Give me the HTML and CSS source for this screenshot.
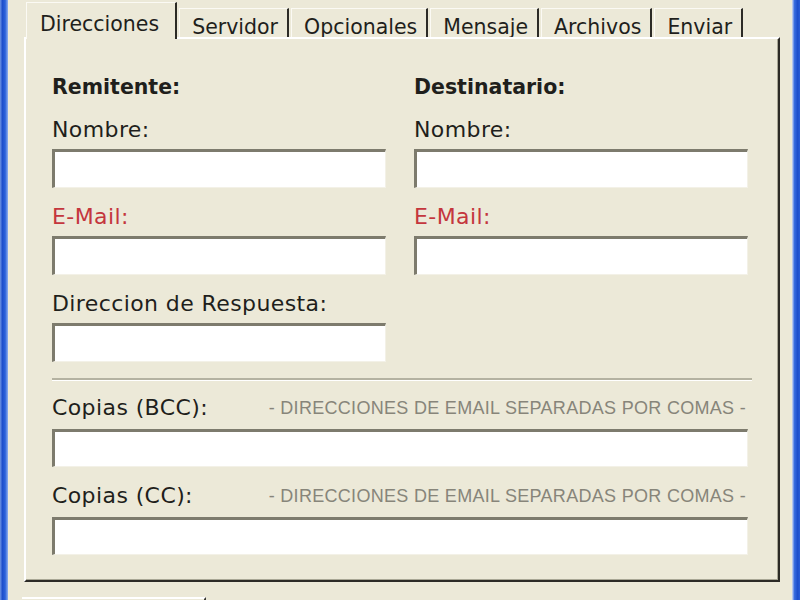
FILE: index.html
```html
<!DOCTYPE html>
<html lang="es">
<head>
  <meta charset="UTF-8">
  <title>Enviar correo</title>
  <link rel="stylesheet" href="styles.css">
</head>
<body>
  <div class="frame">
    <div class="edge edge-left"></div>

    <div class="window">
      <div class="tabs">
        <div class="tab active">Direcciones</div>
        <div class="tab">Servidor</div>
        <div class="tab">Opcionales</div>
        <div class="tab">Mensaje</div>
        <div class="tab">Archivos</div>
        <div class="tab">Enviar</div>
      </div>

      <div class="panel">
        <div class="cols">
          <div class="col">
            <div class="heading">Remitente:</div>
            <label class="field-label" for="fromName">Nombre:</label>
            <input class="field" type="text" id="fromName">
            <label class="field-label required" for="fromMail">E-Mail:</label>
            <input class="field" type="text" id="fromMail">
            <label class="field-label" for="replyTo">Direccion de Respuesta:</label>
            <input class="field" type="text" id="replyTo">
          </div>
          <div class="col">
            <div class="heading">Destinatario:</div>
            <label class="field-label" for="toName">Nombre:</label>
            <input class="field" type="text" id="toName">
            <label class="field-label required" for="toMail">E-Mail:</label>
            <input class="field" type="text" id="toMail">
          </div>
        </div>

        <div class="separator"></div>

        <div class="label-row">
          <label class="field-label" for="bcc">Copias (BCC):</label>
          <span class="hint">- DIRECCIONES DE EMAIL SEPARADAS POR COMAS -</span>
        </div>
        <input class="field wide" type="text" id="bcc">

        <div class="label-row">
          <label class="field-label" for="cc">Copias (CC):</label>
          <span class="hint">- DIRECCIONES DE EMAIL SEPARADAS POR COMAS -</span>
        </div>
        <input class="field wide" type="text" id="cc">
      </div>

      <div class="buttons">
        <button class="btn" type="button"></button>
      </div>
    </div>

    <div class="edge edge-right"></div>
  </div>
</body>
</html>
```

FILE: styles.css
```css
* { box-sizing: border-box; }
body { margin: 0; background: #ece9d8; font-family: "DejaVu Sans", Verdana, sans-serif; color: #1f1f1c; overflow: hidden; }

.frame { display: flex; width: 800px; height: 600px; }
.edge { width: 8px; flex: none; }
.edge-left { background: linear-gradient(90deg, #6f95e4 0, #1d4ecb 30%, #2c62da 65%, #8fb0ee 100%); }
.edge-right { background: linear-gradient(90deg, #d6def2 0, #3a6ee0 30%, #1d4ecb 70%, #2a5dd6 100%); }
.window { flex: 1; display: flex; flex-direction: column; background: #ece9d8; overflow: hidden; }

/* tab strip */
.tabs { flex: none; display: flex; align-items: flex-end; height: 39px; padding-left: 18px; font-size: 20.5px; }
.tab { height: 31px; padding: 6px 9px 0 12px; line-height: 24px; margin-right: 2px; border-top: 1px solid #fbfaf4; border-left: 1px solid #fbfaf4; border-right: 2px solid #2c2b26; white-space: nowrap; }
.tab.active { position: relative; z-index: 1; height: 37px; padding: 9px 16px 0 13px; background: #ece9d8; }

/* page body */
.panel { flex: none; margin: -2px 12px 0 16px; height: 545px; padding: 36px 0 0 26px; border-top: 2px solid #ffffff; border-left: 2px solid #ffffff; border-right: 2px solid #2c2b26; border-bottom: 2px solid #2c2b26; box-shadow: inset -1px -1px 0 #a9a795; }

.cols { display: grid; grid-template-columns: 334px 334px; column-gap: 28px; }
.col { display: flex; flex-direction: column; }

.heading { font-weight: bold; font-size: 20.5px; line-height: 24px; }
.field-label { display: block; font-size: 22px; letter-spacing: 0.4px; line-height: 24px; margin-top: 17px; }
.heading + .field-label { margin-top: 19px; }
.field-label.required { color: #c4363d; }

.field { display: block; width: 334px; height: 39px; margin-top: 7px; background: #ffffff; border-style: solid; border-width: 3px 1px 1px 3px; border-color: #7d7b6d #f3f1e7 #f3f1e7 #7d7b6d; outline: none; }
.field.wide { width: 696px; height: 38px; margin-top: 9px; }

.separator { width: 700px; margin-top: 16px; border-top: 2px solid #b4b2a1; border-bottom: 1px solid #ffffff; }

.label-row { display: flex; justify-content: space-between; align-items: center; width: 696px; margin-top: 17px; }
.label-row .field-label { margin-top: 0; }
.separator + .label-row { margin-top: 15px; }
.hint { font-family: "Liberation Sans", Arial, sans-serif; font-size: 18px; letter-spacing: 0.3px; color: #87857a; padding-right: 2px; }

/* button row under the panel */
.buttons { flex: none; padding: 15px 0 0 14px; }
.btn { display: block; width: 184px; height: 30px; background: #ece9d8; border: none; border-top: 2px solid #ffffff; border-right: 2px solid #3a3934; }
```
